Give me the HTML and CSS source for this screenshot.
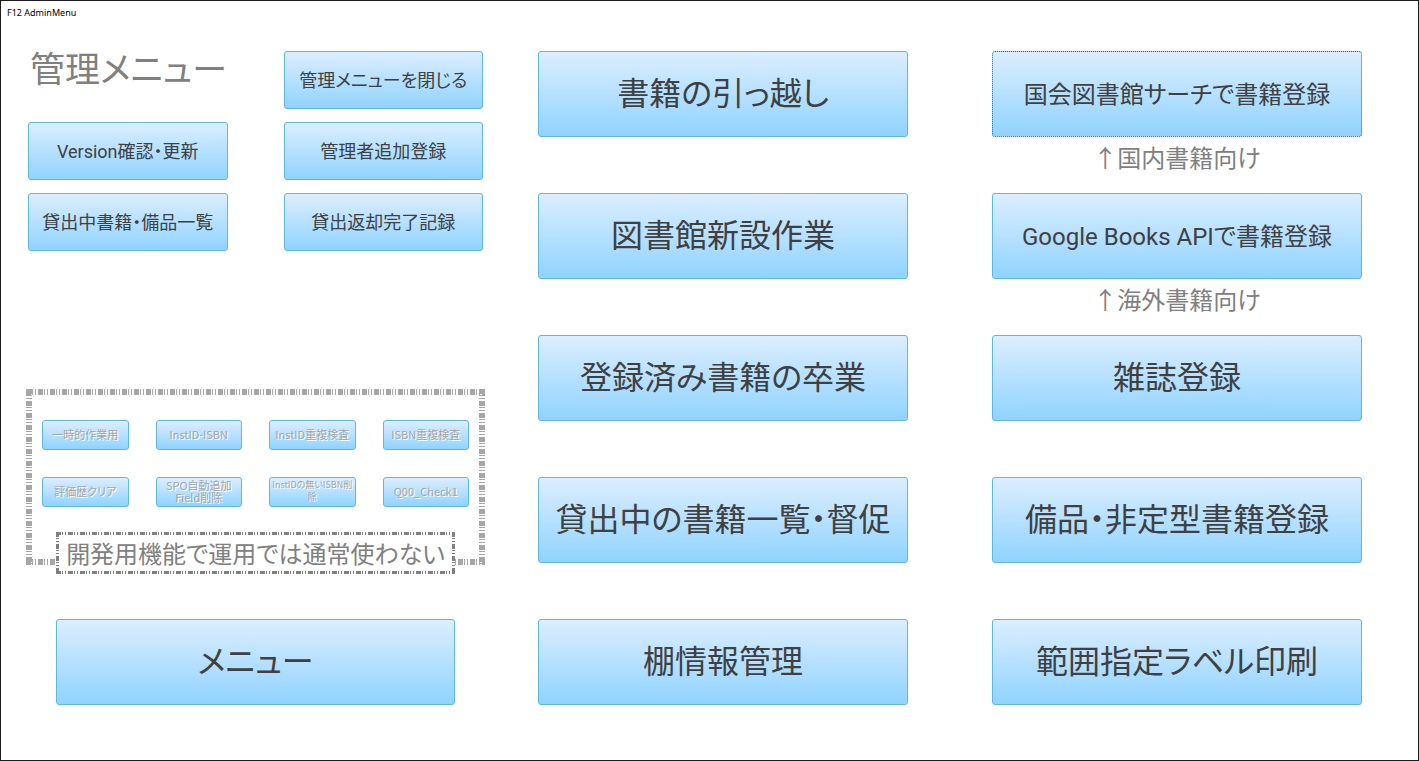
FILE: index.html
```html
<!DOCTYPE html>
<html lang="ja">
<head>
<meta charset="utf-8">
<meta name="viewport" content="width=device-width, initial-scale=1">
<title>F12 AdminMenu</title>
<link rel="stylesheet" href="styles.css">
</head>
<body>
<div class="screen">
  <header class="caption">F12 AdminMenu</header>
  <main class="layout">
    <section class="side">
      <div class="quick">
        <h1 class="title">管理メニュー</h1>
        <button class="btn btn-small" type="button">管理メニューを閉じる</button>
        <button class="btn btn-small" type="button">Version確認・更新</button>
        <button class="btn btn-small" type="button">管理者追加登録</button>
        <button class="btn btn-small" type="button">貸出中書籍・備品一覧</button>
        <button class="btn btn-small" type="button">貸出返却完了記録</button>
      </div>
      <div class="dev" role="group" aria-labelledby="dev-note">
        <div class="dev-grid">
          <button class="btn btn-tiny" type="button" disabled>一時的作業用</button>
          <button class="btn btn-tiny" type="button" disabled>InstID-ISBN</button>
          <button class="btn btn-tiny" type="button" disabled>InstID重複検査</button>
          <button class="btn btn-tiny" type="button" disabled>ISBN重複検査</button>
          <button class="btn btn-tiny" type="button" disabled>評価歴クリア</button>
          <button class="btn btn-tiny" type="button" disabled>SPO自動追加<br>Field削除</button>
          <button class="btn btn-tiny btn-dense" type="button" disabled>InstIDの無いISBN削<br>除</button>
          <button class="btn btn-tiny" type="button" disabled>Q00_Check1</button>
        </div>
        <p class="dev-note" id="dev-note">開発用機能で運用では通常使わない</p>
      </div>
      <button class="btn btn-large btn-menu" type="button">メニュー</button>
    </section>
    <section class="stack stack-middle">
      <div class="item"><button class="btn btn-large" type="button">書籍の引っ越し</button></div>
      <div class="item"><button class="btn btn-large" type="button">図書館新設作業</button></div>
      <div class="item"><button class="btn btn-large" type="button">登録済み書籍の卒業</button></div>
      <div class="item"><button class="btn btn-large" type="button">貸出中の書籍一覧・督促</button></div>
      <div class="item"><button class="btn btn-large" type="button">棚情報管理</button></div>
    </section>
    <section class="stack stack-right">
      <div class="item">
        <button class="btn btn-large btn-medium-text is-focused" type="button" aria-describedby="hint-domestic">国会図書館サーチで書籍登録</button>
        <p class="hint" id="hint-domestic">↑国内書籍向け</p>
      </div>
      <div class="item">
        <button class="btn btn-large btn-medium-text" type="button" aria-describedby="hint-foreign">Google Books APIで書籍登録</button>
        <p class="hint" id="hint-foreign">↑海外書籍向け</p>
      </div>
      <div class="item"><button class="btn btn-large" type="button">雑誌登録</button></div>
      <div class="item"><button class="btn btn-large" type="button">備品・非定型書籍登録</button></div>
      <div class="item"><button class="btn btn-large" type="button">範囲指定ラベル印刷</button></div>
    </section>
  </main>
</div>
</body>
</html>
```
FILE: styles.css
```css
* { box-sizing: border-box; }

body {
  margin: 0;
  background: #fff;
  color: #404040;
  font-family: "Noto Sans CJK JP", sans-serif;
  font-feature-settings: "palt";
}

.screen {
  min-height: 100vh;
  border: 1px solid #1c1c1c;
}

.caption {
  height: 50px;
  padding: 5px 6px;
  color: #000;
  font: 9px/14px "Noto Sans", sans-serif;
}

.layout {
  display: grid;
  grid-template-columns: 459fr 53fr 370fr 84fr 370fr;
  padding: 0 56px 0 25px;
}

.stack-middle { grid-column: 3; }
.stack-right { grid-column: 5; }

.side { display: flex; flex-direction: column; }

.quick {
  display: grid;
  grid-template-columns: repeat(2, minmax(0, 1fr));
  gap: 13px 56px;
  padding: 0 2px;
}

.title {
  margin: 0;
  padding-left: 2px;
  color: #808080;
  font-size: 35px;
  font-weight: 400;
  line-height: 32px;
  white-space: nowrap;
}

.btn {
  width: 100%;
  padding: 0 0 3px;
  border: 1px solid #5cb8e6;
  border-radius: 3px;
  background: linear-gradient(#dceeff, #90d3ff);
  color: #404040;
  font-family: Roboto, "Noto Sans CJK JP", sans-serif;
  font-feature-settings: inherit;
}

.btn-small { height: 58px; font-size: 18px; }

.btn-large {
  display: block;
  height: 86px;
  padding-bottom: 6px;
  font-size: 32px;
}

.btn-medium-text { padding-bottom: 3px; font-size: 24px; }

.btn-tiny {
  height: 30px;
  padding-bottom: 2px;
  color: #a6a6a6;
  font-family: inherit;
  font-size: 11px;
  line-height: 12px;
  white-space: nowrap;
  text-shadow: 1px 1px 0 #fff;
}

.btn-dense { font-size: 9px; }

.is-focused { border: 1px dotted #1e6f96; }

.dev {
  --ink: #a6a6a6;
  --pattern: var(--ink) 0 5px, transparent 5px 6px, var(--ink) 6px 7px, transparent 7px 9px, var(--ink) 9px 10px, transparent 10px 12px;
  display: flex;
  flex-direction: column;
  justify-content: space-between;
  align-items: center;
  height: 176px;
  margin-top: 138px;
  padding: 31px 16px 0;
  background:
    repeating-linear-gradient(90deg, var(--pattern)) top / 100% 6px no-repeat,
    repeating-linear-gradient(90deg, var(--pattern)) bottom / 100% 6px no-repeat,
    repeating-linear-gradient(var(--pattern)) left / 6px 100% no-repeat,
    repeating-linear-gradient(var(--pattern)) right / 6px 100% no-repeat;
}

.dev-grid {
  display: grid;
  grid-template-columns: repeat(4, minmax(0, 1fr));
  gap: 27px;
  width: 100%;
}

.dev-note {
  --ink: #808080;
  --pattern: var(--ink) 0 5px, transparent 5px 6px, var(--ink) 6px 7px, transparent 7px 9px, var(--ink) 9px 10px, transparent 10px 12px;
  flex: none;
  margin: 0 0 -9px;
  padding: 4px 10px;
  background:
    repeating-linear-gradient(90deg, var(--pattern)) top / 100% 3px no-repeat,
    repeating-linear-gradient(90deg, var(--pattern)) bottom / 100% 3px no-repeat,
    repeating-linear-gradient(var(--pattern)) left / 3px 100% no-repeat,
    repeating-linear-gradient(var(--pattern)) right / 3px 100% no-repeat,
    #fff;
  color: #808080;
  font-size: 24px;
  line-height: 34px;
  white-space: nowrap;
}

.btn-menu {
  width: auto;
  margin: 54px 30px 0;
}

.item { height: 142px; }
.item:last-child { height: 86px; }

.hint {
  margin: 0;
  color: #808080;
  font-size: 24px;
  line-height: 40px;
  text-align: center;
}
```
